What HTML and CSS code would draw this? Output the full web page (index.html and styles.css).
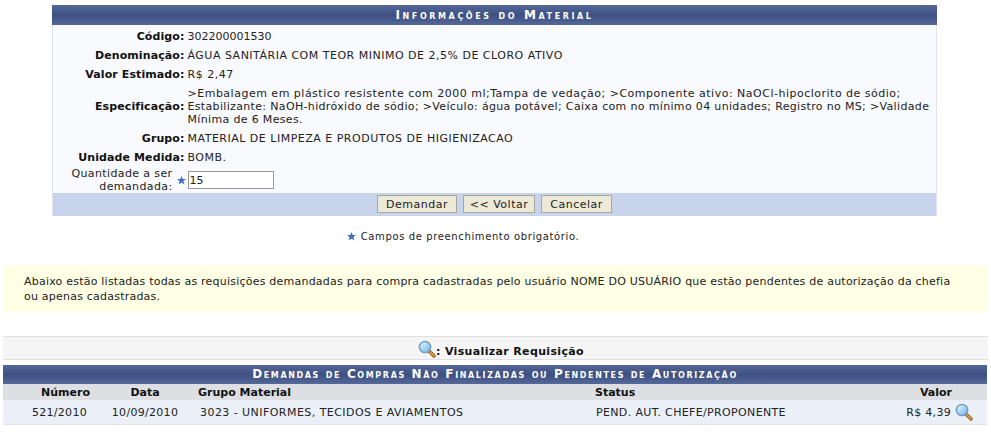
FILE: index.html
```html
<!DOCTYPE html>
<html lang="pt-BR">
<head>
    <meta charset="UTF-8">
    <title>Informações do Material</title>
    <link rel="stylesheet" href="styles.css">
</head>
<body>
    <svg class="defs" width="0" height="0">
        <defs>
            <linearGradient id="lens" x1="0" y1="0" x2="1" y2="1">
                <stop offset="0" stop-color="#e8f6ff"/>
                <stop offset="1" stop-color="#6fb8ea"/>
            </linearGradient>
            <symbol id="lupa" viewBox="0 0 18 18">
                <path d="M11 11l5 5" stroke="#8a5a1c" stroke-width="3.4" stroke-linecap="round"/>
                <path d="M11.5 11.5l4.5 4.5" stroke="#eda63c" stroke-width="1.6" stroke-linecap="round"/>
                <circle cx="7" cy="7" r="5.6" fill="url(#lens)" stroke="#6e9cc4" stroke-width="1.5"/>
            </symbol>
            <symbol id="estrela" viewBox="0 0 9 9">
                <path d="M4.5 0l1.2 3h3.3L6.4 5l1 3.6-2.9-2-2.9 2 1-3.6L0 3h3.3z" fill="#3a70c8"/>
            </symbol>
        </defs>
    </svg>

    <table class="formulario">
        <caption>Informações do Material</caption>
        <tbody>
            <tr class="primeira"><th>Código:</th><td class="numero">302200001530</td></tr>
            <tr><th>Denominação:</th><td>ÁGUA SANITÁRIA COM TEOR MINIMO DE 2,5% DE CLORO ATIVO</td></tr>
            <tr><th>Valor Estimado:</th><td>R$ 2,47</td></tr>
            <tr>
                <th>Especificação:</th>
                <td class="especificacao">&gt;Embalagem em plástico resistente com 2000 ml;Tampa de vedação; &gt;Componente ativo: NaOCl-hipoclorito de sódio; <span>Estabilizante: NaOH-hidróxido de sódio; &gt;Veículo: água potável; Caixa com no mínimo 04 unidades; Registro no MS; &gt;Validade Mínima de 6 Meses.</span></td>
            </tr>
            <tr><th>Grupo:</th><td>MATERIAL DE LIMPEZA E PRODUTOS DE HIGIENIZACAO</td></tr>
            <tr><th>Unidade Medida:</th><td>BOMB.</td></tr>
            <tr class="campo">
                <th>
                    <div class="rotulo">
                        <span>Quantidade a ser demandada:</span>
                        <svg class="estrela"><use href="#estrela"/></svg>
                    </div>
                </th>
                <td><input type="text" value="15" class="quantidade"></td>
            </tr>
        </tbody>
        <tfoot>
            <tr>
                <td colspan="2">
                    <div class="botoes">
                        <button type="button" class="btn-demandar">Demandar</button>
                        <button type="button" class="btn-voltar">&lt;&lt; Voltar</button>
                        <button type="button" class="btn-cancelar">Cancelar</button>
                    </div>
                </td>
            </tr>
        </tfoot>
    </table>

    <p class="obrigatorio"><svg class="estrela"><use href="#estrela"/></svg><span>Campos de preenchimento obrigatório.</span></p>

    <div class="descricao">
        Abaixo estão listadas todas as requisições demandadas para compra cadastradas pelo usuário NOME DO USUÁRIO que estão pendentes de autorização da chefia ou apenas cadastradas.
    </div>

    <div class="legenda"><svg class="lupa"><use href="#lupa"/></svg><span>: Visualizar Requisição</span></div>

    <table class="listagem">
        <caption>Demandas de Compras Não Finalizadas ou Pendentes de Autorização</caption>
        <thead>
            <tr>
                <th class="col-num">Número</th>
                <th class="col-data">Data</th>
                <th class="col-grupo">Grupo Material</th>
                <th class="col-status">Status</th>
                <th class="col-valor">Valor</th>
                <th class="col-acao"></th>
            </tr>
        </thead>
        <tbody>
            <tr>
                <td class="col-num">521/2010</td>
                <td class="col-data">10/09/2010</td>
                <td class="col-grupo">3023 - UNIFORMES, TECIDOS E AVIAMENTOS</td>
                <td class="col-status">PEND. AUT. CHEFE/PROPONENTE</td>
                <td class="col-valor">R$ 4,39</td>
                <td class="col-acao"><svg class="lupa"><use href="#lupa"/></svg></td>
            </tr>
        </tbody>
    </table>
</body>
</html>
```

FILE: styles.css
```css
* {
    box-sizing: border-box;
}

body {
    margin: 0;
    padding: 5px 3px 0;
    background: white;
    color: #222;
    font-family: "DejaVu Sans", Verdana, sans-serif;
    font-size: 11px;
}

.defs {
    position: absolute;
}

table {
    border-collapse: collapse;
}

caption {
    height: 20px;
    line-height: 20px;
    background: linear-gradient(#54689a, #3f4f81 50%, #54689a);
    color: white;
    font-weight: bold;
    font-variant: small-caps;
    font-size: 12px;
    text-align: center;
}

.formulario {
    width: 885px;
    margin-left: 49px;
    background: #f9fafd;
    border-left: 1px solid #dfe3ee;
    border-right: 1px solid #dfe3ee;
}

.formulario caption {
    letter-spacing: 2.6px;
}

.formulario th {
    width: 134px;
    padding: 3px 2px 3px 0;
    text-align: right;
    font-weight: bold;
    letter-spacing: 0.1px;
    color: #111;
}

.formulario td {
    padding: 3px 10px 3px 1px;
    line-height: 13px;
    letter-spacing: 0.5px;
}

.formulario tbody th,
.formulario tbody td {
    height: 19px;
}

.formulario .primeira th,
.formulario .primeira td {
    height: 21px;
    padding-top: 5px;
}

.formulario td.numero {
    letter-spacing: 0;
}

.formulario td.especificacao {
    padding-right: 4px;
}

.especificacao span {
    letter-spacing: 0.34px;
}

.formulario .campo th,
.formulario .campo td {
    padding: 0 0 0 1px;
}

.formulario .campo th {
    padding-right: 1px;
}

.rotulo {
    display: flex;
    justify-content: flex-end;
    align-items: center;
    gap: 4px;
    font-weight: normal;
    line-height: 13px;
    letter-spacing: 0.38px;
    color: #222;
}

.rotulo span {
    width: 104px;
}

.estrela {
    width: 9px;
    height: 9px;
    flex-shrink: 0;
}

.quantidade {
    display: block;
    width: 86px;
    height: 18px;
    padding: 1px;
    border: 1px solid #9a9a9a;
    background: white;
    font: 11px "DejaVu Sans", Verdana, sans-serif;
    color: #222;
}

.formulario tfoot td {
    height: 23px;
    padding: 2px 0 0;
    background: #c8d4ec;
    vertical-align: top;
}

.botoes {
    display: flex;
    justify-content: center;
    gap: 6px;
}

button {
    height: 18px;
    padding: 0;
    border: 1px solid #a8a898;
    background: #ece9d8;
    color: #222;
    font: 11px "DejaVu Sans", Verdana, sans-serif;
    letter-spacing: 0.5px;
}

.btn-demandar {
    width: 80px;
}

.btn-voltar {
    width: 72px;
}

.btn-cancelar {
    width: 71px;
}

.obrigatorio {
    display: flex;
    justify-content: center;
    align-items: center;
    gap: 5px;
    margin: 14px 0 0;
    padding-right: 65px;
    font-size: 10px;
    line-height: 13px;
    letter-spacing: 0.62px;
}

.descricao {
    margin-top: 22px;
    padding: 9px 30px 9px 21px;
    height: 47px;
    background: #ffffe5;
    line-height: 15px;
    letter-spacing: 0.22px;
}

.legenda {
    display: flex;
    justify-content: center;
    align-items: center;
    height: 24px;
    margin-top: 24px;
    padding: 6px 0 0 11px;
    background: #f5f5f5;
    border-top: 1px solid #e0e0e0;
    border-bottom: 1px solid #e0e0e0;
    font-weight: bold;
    letter-spacing: 0.35px;
    color: #111;
}

.lupa {
    width: 18px;
    height: 18px;
}

.legenda .lupa {
    margin-top: -4px;
}

.listagem {
    width: 984px;
    margin-top: 5px;
    table-layout: fixed;
    border-bottom: 1px solid #dfe3ee;
}

.listagem caption {
    height: 19px;
    line-height: 19px;
    letter-spacing: 1.62px;
}

.listagem thead th {
    height: 16px;
    padding: 1px 0 0;
    background: #dedfe3;
    color: #111;
    font-weight: bold;
}

.listagem td {
    height: 24px;
    padding: 1px 0 0;
    background: #ebf0f8;
    letter-spacing: 0.3px;
}

.listagem .col-num {
    width: 92px;
    padding-right: 5px;
    text-align: right;
}

.listagem td.col-num {
    padding-right: 8px;
}

.col-data {
    width: 100px;
    text-align: center;
}

.listagem .col-grupo {
    width: 398px;
    padding-left: 3px;
    text-align: left;
}

.listagem td.col-grupo {
    padding-left: 5px;
    letter-spacing: 0.45px;
}

.listagem .col-status {
    width: 207px;
    padding-left: 2px;
    text-align: left;
}

.listagem td.col-status {
    padding-left: 3px;
    letter-spacing: 0.35px;
}

.listagem .col-valor {
    width: 153px;
    padding-right: 1px;
    text-align: right;
}

.listagem td.col-valor {
    padding-right: 2px;
}

.listagem .col-acao {
    width: 34px;
    padding-left: 2px;
    text-align: left;
    line-height: 0;
}
```
